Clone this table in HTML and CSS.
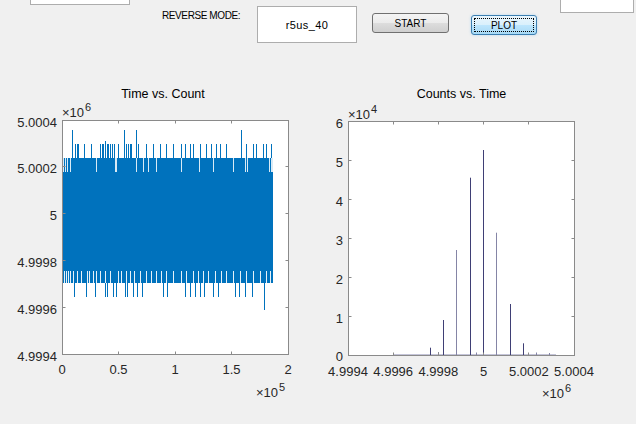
FILE: index.html
```html
<!DOCTYPE html>
<html>
<head>
<meta charset="utf-8">
<title>Time vs. Count</title>
<link rel="stylesheet" href="styles.css">
</head>
<body>
<div class="app">
  <div class="top">
    <div class="box box-tl"></div>
    <div class="lbl">REVERSE MODE:</div>
    <div class="field">r5us_40</div>
    <div class="btn btn-start">START</div>
    <div class="btn btn-plot"><span class="focus">PLOT</span></div>
    <div class="box box-tr"></div>
  </div>
  <div class="plots">
    <svg class="plot" width="318" height="364" viewBox="0 60 318 364">
      <text class="title" x="163" y="98" text-anchor="middle">Time vs. Count</text>
      <rect x="62.5" y="120.5" width="226" height="234" fill="#fff" stroke="none"/>
      <rect x="62" y="158" width="211" height="125" fill="#0072bd"/>
      <path stroke="#fff" stroke-width="1" opacity="0.85" d="M63.5 158V172 M65.5 158V172 M67.5 158V172 M70.5 158V172 M96.5 158V172 M115.5 158V172 M116.5 158V172 M136.5 158V172 M143.5 158V172 M148.5 158V172 M156.5 158V172 M181.5 158V172 M199.5 158V172 M213.5 158V172 M233.5 158V172 M245.5 158V172 M247.5 158V172 M269.5 158V172 M271.5 158V172 M272.5 158V172"/>
      <path stroke="#fff" stroke-width="1" opacity="0.9" d="M64.5 271V283 M66.5 271V283 M68.5 271V283 M70.5 271V283 M73.5 271V283 M77.5 271V283 M81.5 271V283 M87.5 271V283 M89.5 271V283 M93.5 271V283 M96.5 271V283 M100.5 271V283 M105.5 271V283 M110.5 271V283 M118.5 271V283 M121.5 271V283 M126.5 271V283 M130.5 271V283 M134.5 271V283 M140.5 271V283 M146.5 271V283 M151.5 271V283 M156.5 271V283 M161.5 271V283 M166.5 271V283 M173.5 271V283 M181.5 271V283 M186.5 271V283 M193.5 271V283 M198.5 271V283 M203.5 271V283 M208.5 271V283 M215.5 271V283 M221.5 271V283 M226.5 271V283 M233.5 271V283 M240.5 271V283 M246.5 271V283 M253.5 271V283 M260.5 271V283 M266.5 271V283 M270.5 271V283"/>
      <path stroke="#0072bd" stroke-width="1" d="M75.5 144V158 M77.5 144V158 M78.5 144V158 M84.5 144V158 M91.5 144V158 M100.5 144V158 M102.5 144V158 M103.5 144V158 M107.5 144V158 M108.5 144V158 M110.5 144V158 M112.5 144V158 M114.5 144V158 M118.5 144V158 M126.5 144V158 M128.5 144V158 M130.5 144V158 M131.5 144V158 M138.5 144V158 M146.5 144V158 M153.5 144V158 M160.5 144V158 M166.5 144V158 M173.5 144V158 M181.5 144V158 M185.5 144V158 M190.5 144V158 M193.5 144V158 M200.5 144V158 M206.5 144V158 M211.5 144V158 M216.5 144V158 M220.5 144V158 M226.5 144V158 M246.5 144V158 M253.5 144V158 M256.5 144V158 M263.5 144V158 M266.5 144V158 M271.5 144V158 M105.5 141V158 M72.5 130V158 M124.5 130V158 M136.5 130V158 M241.5 130V158"/>
      <path stroke="#0072bd" stroke-width="1" d="M74.5 283V297 M86.5 283V297 M95.5 283V297 M105.5 283V297 M107.5 283V297 M113.5 283V297 M116.5 283V297 M125.5 283V297 M127.5 283V297 M133.5 283V297 M137.5 283V297 M142.5 283V297 M163.5 283V297 M167.5 283V297 M185.5 283V297 M190.5 283V297 M195.5 283V297 M200.5 283V297 M204.5 283V297 M213.5 283V297 M218.5 283V297 M235.5 283V297 M239.5 283V297 M245.5 283V297 M252.5 283V297 M264.5 283V310"/>
      <rect x="62.5" y="120.5" width="226" height="234" fill="none" stroke="#8a8a8a"/>
      <path stroke="#8a8a8a" d="M118.5 354V351.5 M175.5 354V351.5 M231.5 354V351.5 M118.5 121V123.5 M175.5 121V123.5 M231.5 121V123.5 M63 166.5H65.5 M63 213.5H65.5 M63 260.5H65.5 M63 307.5H65.5 M288 166.5H285.5 M288 213.5H285.5 M288 260.5H285.5 M288 307.5H285.5"/>
      <g class="tick" text-anchor="end">
        <text x="57" y="126.5">5.0004</text>
        <text x="57" y="173">5.0002</text>
        <text x="57" y="220">5</text>
        <text x="57" y="267">4.9998</text>
        <text x="57" y="313.5">4.9996</text>
        <text x="57" y="360.5">4.9994</text>
      </g>
      <g class="tick" text-anchor="middle">
        <text x="62" y="374">0</text>
        <text x="118.5" y="374">0.5</text>
        <text x="175" y="374">1</text>
        <text x="231.5" y="374">1.5</text>
        <text x="288" y="374">2</text>
      </g>
      <text class="expo" x="62" y="117">×10<tspan class="sup" dy="-6" dx="1">6</tspan></text>
      <text class="expo" x="256" y="397">×10<tspan class="sup" dy="-6" dx="1">5</tspan></text>
    </svg>
    <svg class="plot" width="318" height="364" viewBox="318 60 318 364">
      <text class="title" x="461.5" y="98" text-anchor="middle">Counts vs. Time</text>
      <rect x="348.5" y="121.5" width="226" height="234" fill="#fff" stroke="none"/>
      <path stroke="#c4c4d8" d="M393 354.5H556"/>
      <path stroke="#3f3f75" d="M430.5 355V347.7 M443.5 355V320 M470.5 355V177.7 M483.5 355V150 M510.5 355V304 M523.5 355V343.3"/>
      <path stroke="#8585a6" d="M456.5 355V250 M496.5 355V232.7 M438.5 355V352 M476.5 355V352.5 M536.5 355V352.5 M549.5 355V353"/>
      <rect x="348.5" y="121.5" width="226" height="234" fill="none" stroke="#8a8a8a"/>
      <path stroke="#8a8a8a" d="M393.5 355V352.5 M438.5 355V352.5 M483.5 355V352.5 M528.5 355V352.5 M393.5 122V124.5 M438.5 122V124.5 M483.5 122V124.5 M528.5 122V124.5 M349 316.5H351.5 M349 277.5H351.5 M349 238.5H351.5 M349 199.5H351.5 M349 160.5H351.5 M574 316.5H571.5 M574 277.5H571.5 M574 238.5H571.5 M574 199.5H571.5 M574 160.5H571.5"/>
      <g class="tick" text-anchor="end">
        <text x="343" y="128.3">6</text>
        <text x="343" y="167">5</text>
        <text x="343" y="206">4</text>
        <text x="343" y="244.8">3</text>
        <text x="343" y="283.6">2</text>
        <text x="343" y="322.5">1</text>
        <text x="343" y="361.3">0</text>
      </g>
      <g class="tick" text-anchor="middle">
        <text x="348" y="376">4.9994</text>
        <text x="393.2" y="376">4.9996</text>
        <text x="438.4" y="376">4.9998</text>
        <text x="483.6" y="376">5</text>
        <text x="528.8" y="376">5.0002</text>
        <text x="574" y="376">5.0004</text>
      </g>
      <text class="expo" x="348" y="119">×10<tspan class="sup" dy="-6" dx="1">4</tspan></text>
      <text class="expo" x="542" y="398">×10<tspan class="sup" dy="-6" dx="1">6</tspan></text>
    </svg>
  </div>
</div>
</body>
</html>
```
FILE: styles.css
```css
html, body {
  margin: 0;
  padding: 0;
  background: #f0f0f0;
}
.app {
  width: 636px;
  height: 424px;
  overflow: hidden;
  background: #f0f0f0;
  font-family: "Liberation Sans", Arial, sans-serif;
}
.top {
  display: flex;
  align-items: flex-start;
  height: 60px;
}
.box {
  background: #fff;
  border: 1px solid #adadad;
  box-sizing: border-box;
  height: 30px;
}
.box-tl {
  margin-left: 30px;
  width: 100px;
  margin-top: -25px;
}
.box-tr {
  margin-left: 23px;
  width: 74px;
  margin-top: -17px;
}
.lbl {
  margin-left: 32px;
  margin-top: 10px;
  width: 80px;
  font-size: 10px;
  line-height: 12px;
  letter-spacing: -0.4px;
  color: #000;
  white-space: nowrap;
}
.field {
  margin-left: 15px;
  margin-top: 6px;
  width: 100px;
  height: 37px;
  box-sizing: border-box;
  background: #fff;
  border: 1px solid #adadad;
  display: flex;
  align-items: center;
  justify-content: center;
  font-size: 11px;
  letter-spacing: 0.4px;
  color: #000;
}
.btn {
  box-sizing: border-box;
  height: 20px;
  display: flex;
  align-items: center;
  justify-content: center;
  font-size: 10px;
  color: #000;
  border-radius: 3px;
}
.btn-start {
  margin-left: 15px;
  margin-top: 13px;
  width: 77px;
  border: 1px solid #707070;
  background: linear-gradient(#f4f4f4, #ebebeb 50%, #dddddd 51%, #cfcfcf);
}
.btn-plot {
  margin-left: 22px;
  margin-top: 15px;
  width: 66px;
  border: 1px solid #3c7fb1;
  background: linear-gradient(#eaf6fd, #d9f0fc 50%, #bee6fd 51%, #a7d9f5);
  padding: 2px;
  box-shadow: 0 0 3px rgba(120, 190, 240, 0.45);
}
.focus {
  flex: 1;
  align-self: stretch;
  display: flex;
  align-items: center;
  justify-content: center;
  border: 1px dotted #000;
}
.plots {
  display: flex;
}
.plot {
  display: block;
  flex: none;
}
.title {
  font-family: "Liberation Sans", Arial, sans-serif;
  font-size: 12.5px;
  fill: #000;
}
.tick {
  font-family: "Liberation Sans", Arial, sans-serif;
  font-size: 13px;
  fill: #262626;
}
.expo {
  font-family: "Liberation Sans", Arial, sans-serif;
  font-size: 13px;
  fill: #262626;
}
.sup {
  font-size: 11px;
}
```
